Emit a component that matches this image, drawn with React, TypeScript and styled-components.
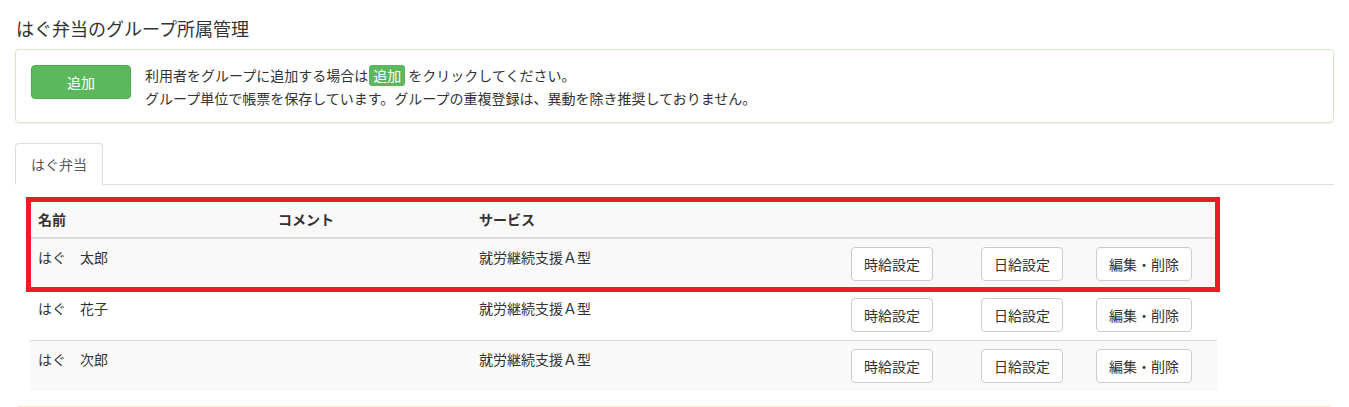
import React from 'react'
import styled, { createGlobalStyle } from 'styled-components'

const GlobalStyle = createGlobalStyle`
  html, body {
    margin: 0;
    padding: 0;
    background: #fff;
  }
  body {
    font-family: "Noto Sans CJK JP", "Noto Sans", "Liberation Sans", sans-serif;
    font-size: 14px;
    line-height: 20px;
    color: #333;
  }
`

type Member = { name: string; comment: string; service: string }

const members: Member[] = [
  { name: 'はぐ　太郎', comment: '', service: '就労継続支援Ａ型' },
  { name: 'はぐ　花子', comment: '', service: '就労継続支援Ａ型' },
  { name: 'はぐ　次郎', comment: '', service: '就労継続支援Ａ型' },
]

export default function App() {
  return (
    <Page>
      <GlobalStyle />
      <Title>はぐ弁当のグループ所属管理</Title>

      <InfoPanel>
        <AddButton>追加</AddButton>
        <InfoText>
          <FirstLine>
            利用者をグループに追加する場合は<Badge>追加</Badge> をクリックしてください。
          </FirstLine>
          <SecondLine>グループ単位で帳票を保存しています。グループの重複登録は、異動を除き推奨しておりません。</SecondLine>
        </InfoText>
      </InfoPanel>

      <Tabs>
        <Tab>はぐ弁当</Tab>
      </Tabs>

      <TableWrap>
        <Table>
          <colgroup>
            <col style={{ width: 240 }} />
            <col style={{ width: 201 }} />
            <col style={{ width: 372 }} />
            <col style={{ width: 130 }} />
            <col style={{ width: 115 }} />
            <col />
          </colgroup>
          <thead>
            <tr>
              <Th>名前</Th>
              <Th>コメント</Th>
              <Th>サービス</Th>
              <Th />
              <Th />
              <Th />
            </tr>
          </thead>
          <tbody>
            {members.map((m, i) => (
              <Row key={m.name} $striped={i % 2 === 0}>
                <Td>{m.name}</Td>
                <Td>{m.comment}</Td>
                <Td>{m.service}</Td>
                <Td><ActionButton>時給設定</ActionButton></Td>
                <Td><ActionButton>日給設定</ActionButton></Td>
                <Td><ActionButton>編集・削除</ActionButton></Td>
              </Row>
            ))}
          </tbody>
        </Table>
        <Highlight />
      </TableWrap>

      <NextPanel>
        <NextHeading />
      </NextPanel>
    </Page>
  )
}

const Page = styled.div`
  padding: 0 15px;
  overflow: hidden;
  height: 407px;
`

const Title = styled.h3`
  margin: 18px 0 11px 1px;
  font-size: 18px;
  line-height: 20px;
  font-weight: 400;
  color: #333;
`

const InfoPanel = styled.div`
  display: flex;
  align-items: flex-start;
  gap: 14px;
  padding: 15px;
  border: 1px solid #d6e9c6;
  border-radius: 4px;
  box-shadow: 0 1px 1px rgba(0, 0, 0, 0.05);
  margin-bottom: 20px;
`

const AddButton = styled.button`
  width: 100px;
  height: 34px;
  flex: none;
  background: #5cb85c;
  border: 1px solid #4cae4c;
  border-radius: 4px;
  color: #fff;
  font-family: inherit;
  font-size: 14px;
  padding: 0;
`

const InfoText = styled.div`
  margin-top: -1px;
  font-size: 14px;
  line-height: 20px;
`

const FirstLine = styled.div`
  line-height: 23px;
`

const SecondLine = styled.div`
  position: relative;
  top: 1px;
`

const Badge = styled.span`
  display: inline-block;
  margin-left: 1px;
  background: #5cb85c;
  color: #fff;
  border-radius: 3px;
  padding: 1px 4px;
  line-height: 19px;
  font-size: 14px;
`

const Tabs = styled.div`
  display: flex;
  border-bottom: 1px solid #ddd;
`

const Tab = styled.div`
  padding: 10px 15px;
  margin-bottom: -1px;
  border: 1px solid #ddd;
  border-bottom-color: transparent;
  border-radius: 4px 4px 0 0;
  background: #fff;
  color: #555;
  line-height: 20px;
`

const TableWrap = styled.div`
  position: relative;
  width: 90%;
  margin: 16px 0 15px 15px;
`

const Table = styled.table`
  width: 100%;
  table-layout: fixed;
  border-collapse: collapse;
  border-spacing: 0;
`

const Th = styled.th`
  text-align: left;
  padding: 8px;
  font-weight: 700;
  line-height: 20px;
  background: #f9f9f9;
  border-bottom: 2px solid #ddd;
`

const Row = styled.tr<{ $striped: boolean }>`
  background: ${p => (p.$striped ? '#f9f9f9' : '#fff')};
`

const Td = styled.td`
  padding: 8px;
  vertical-align: top;
  line-height: 20px;
  border-top: 1px solid #ddd;
  white-space: nowrap;
`

const ActionButton = styled.button`
  height: 34px;
  padding: 6px 12px;
  background: #fff;
  border: 1px solid #ccc;
  border-radius: 4px;
  color: #333;
  font-family: inherit;
  font-size: 14px;
  line-height: 20px;
`

const Highlight = styled.div`
  position: absolute;
  top: -4px;
  left: -4px;
  width: 1194px;
  height: 95px;
  box-sizing: border-box;
  border: 5px solid #ed1c24;
  pointer-events: none;
`

const NextPanel = styled.div`
  border: 1px solid #faebcc;
  border-radius: 4px;
  height: 60px;
`

const NextHeading = styled.div`
  height: 40px;
  background: #fcf8e3;
`
